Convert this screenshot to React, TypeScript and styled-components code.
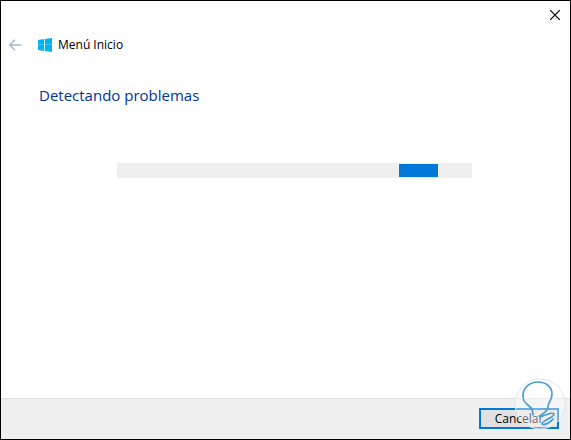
import React from "react";
import styled, { createGlobalStyle } from "styled-components";

const GlobalStyle = createGlobalStyle`
  * { box-sizing: border-box; }
  body { margin: 0; background: #fff; }
`;

const Dialog = styled.main`
  position: relative;
  display: flex;
  flex-direction: column;
  min-height: 100vh;
  border: 1px solid #000;
  background: #fff;
  color: #000;
  font: 12px/16px "Open Sans", "Noto Sans", sans-serif;
`;

const TitleBar = styled.div`
  display: flex;
  justify-content: flex-end;
  height: 28px;
`;

const IconButton = styled.button`
  display: flex;
  align-items: center;
  justify-content: center;
  width: 30px;
  height: 28px;
  padding: 0;
  border: 0;
  background: none;
`;

const BackButton = styled(IconButton)`
  width: 28px;
`;

const Header = styled.header`
  display: flex;
  align-items: center;
  height: 32px;
`;

const Logo = styled.svg`
  margin: 0 6px 0 9px;
`;

const AppName = styled.span`
  line-height: 18px;
`;

const Content = styled.section`
  flex: 1;
  padding: 22px 98px 0 38px;
`;

const Heading = styled.h1`
  margin: 0;
  color: #003399;
  font-size: 15px;
  font-weight: 400;
  line-height: 24px;
`;

const Track = styled.div`
  display: flex;
  height: 15px;
  margin: 56px 0 0 78px;
  padding: 1px 0;
  background: #efefef;
`;

const Chunk = styled.div<{ $start: number }>`
  width: 11%;
  margin-left: ${({ $start }) => $start}%;
  background: #0078d7;
`;

const Footer = styled.footer`
  display: flex;
  justify-content: flex-end;
  padding: 9px 11px 10px;
  border-top: 1px solid #dfdfdf;
  background: #f0f0f0;
`;

const CancelButton = styled.button`
  width: 80px;
  height: 21px;
  padding: 0;
  border: 2px solid #0078d7;
  background: #e1e1e1;
  color: #000;
  font: inherit;
`;

const Watermark = styled.svg`
  position: absolute;
  right: 4px;
  bottom: 9px;
  pointer-events: none;
`;

export default function App() {
  return (
    <>
      <GlobalStyle />
      <Dialog>
        <TitleBar>
          <IconButton type="button" aria-label="Cerrar">
            <svg width="10" height="10" viewBox="0 0 10 10" stroke="#000" strokeWidth="1.2">
              <path d="M0 0 10 10M10 0 0 10" />
            </svg>
          </IconButton>
        </TitleBar>
        <Header>
          <BackButton type="button" aria-label="Atrás">
            <svg width="14" height="12" viewBox="0 0 14 12" fill="none" stroke="#a6bacb" strokeWidth="1.6">
              <path d="M13.5 6H2M7 .8 1.8 6 7 11.2" />
            </svg>
          </BackButton>
          <Logo width="14" height="14" viewBox="0 0 14 14" aria-hidden="true" fill="#00b4f1">
            <path d="M0 2 6 1.1V6.8H0zM6.8 1 14 0V6.8H6.8zM0 7.1H6V12.9L0 12zM6.8 7.1H14V14L6.8 13z" />
          </Logo>
          <AppName>Menú Inicio</AppName>
        </Header>
        <Content>
          <Heading>Detectando problemas</Heading>
          <Track role="progressbar" aria-label="Detectando problemas">
            <Chunk $start={79.5} />
          </Track>
        </Content>
        <Footer>
          <CancelButton type="button">Cancelar</CancelButton>
        </Footer>
        <Watermark width="52" height="52" viewBox="0 0 52 52" aria-hidden="true" fill="none">
          <circle cx="26" cy="26" r="25" fill="#fff" fillOpacity="0.4" stroke="#dce8f2" />
          <g stroke="#4b9bd0" strokeWidth="1.7" strokeLinecap="round" strokeLinejoin="round">
            <path d="M19 37C19 34 18 30 15 28C11 25 8 22 9 16C10 9 16 4 24 4C32 4 38 9 38 16C38 23 34 24 34 29C34 33 31 34 27 37" />
            <path d="M25 38C30 39 38 33 40 36C41 39 27 43 28 46C30 48 37 44 39 41" />
          </g>
        </Watermark>
      </Dialog>
    </>
  );
}
